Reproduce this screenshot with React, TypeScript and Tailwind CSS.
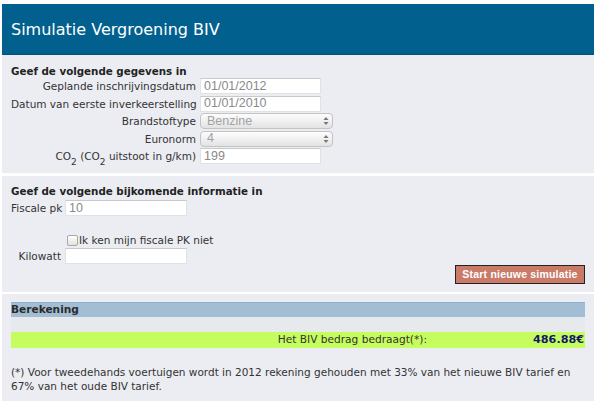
import { useState } from "react";

const sans = "font-['DejaVu_Sans',Verdana,sans-serif]";
const mac = "font-['Liberation_Sans',Arial,sans-serif]";

function TextBox({ value, width }: { value: string; width: string }) {
  return (
    <div className={`${width} h-[16px] bg-white border border-[#e2e2e2] border-t-[#c9c9c9] px-[3px] flex items-center text-[12.5px] text-[#8a8a8a] ${mac}`}>
      {value}
    </div>
  );
}

function SelectBox({ value }: { value: string }) {
  return (
    <div className={`w-[133px] h-[16px] rounded-[4px] border border-[#c3c3c3] bg-gradient-to-b from-[#fdfdfd] to-[#e3e3e3] pl-[6px] pr-[3px] flex items-center justify-between text-[12.5px] text-[#a2a2a2] ${mac}`}>
      <span>{value}</span>
      <svg width="6" height="10" viewBox="0 0 6 10" className="text-[#777]">
        <path d="M0.5 4 L3 1 L5.5 4 Z" fill="currentColor" />
        <path d="M0.5 6 L3 9 L5.5 6 Z" fill="currentColor" />
      </svg>
    </div>
  );
}

export default function App() {
  const [noPk, setNoPk] = useState(false);

  const rows: { label: React.ReactNode; field: React.ReactNode }[] = [
    { label: "Geplande inschrijvingsdatum", field: <TextBox value="01/01/2012" width="w-[121px]" /> },
    { label: "Datum van eerste inverkeerstelling", field: <TextBox value="01/01/2010" width="w-[121px]" /> },
    { label: "Brandstoftype", field: <SelectBox value="Benzine" /> },
    { label: "Euronorm", field: <SelectBox value="4" /> },
    {
      label: (
        <>
          CO<sub className="text-[9px] align-[-3px]">2</sub> (CO<sub className="text-[9px] align-[-3px]">2</sub> uitstoot in g/km)
        </>
      ),
      field: <TextBox value="199" width="w-[121px]" />,
    },
  ];

  return (
    <div className={`w-[600px] h-[412px] bg-white pt-[4px] pl-[2px] pr-[6px] ${sans} text-[#222]`}>
      <div className="h-[51px] bg-[#02608f] border-b border-[#0a4f73] flex items-center pl-[9px] pt-[1px]">
        <h1 className="text-white text-[16px]">Simulatie Vergroening BIV</h1>
      </div>

      <section className="bg-[#ecedf2] h-[118px] pt-[10px] px-[9px]">
        <h2 className="text-[10.3px] font-bold leading-[13px]">Geef de volgende gegevens in</h2>
        <div className="grid grid-cols-[185px_auto] gap-x-[4px] gap-y-[1.5px] text-[10.5px] text-[#333]">
          {rows.map((r, i) => (
            <div key={i} className="contents">
              <div className="text-right leading-[16px] whitespace-nowrap">{r.label}</div>
              <div className="flex items-center">{r.field}</div>
            </div>
          ))}
        </div>
      </section>

      <section className="bg-[#ecedf2] h-[116px] mt-[3px] pt-[9px] px-[9px]">
        <h2 className="text-[10.3px] font-bold leading-[13px]">Geef de volgende bijkomende informatie in</h2>
        <div className="grid grid-cols-[50px_auto] gap-x-[4px] mt-[2px] text-[10.5px] text-[#333]">
          <div className="text-right leading-[16px] whitespace-nowrap">Fiscale pk</div>
          <TextBox value="10" width="w-[122px]" />
          <div className="h-[17px]" />
          <div />
          <div />
          <label className="flex items-center gap-[1px] leading-[15px] pl-[2px] whitespace-nowrap">
            <input
              type="checkbox"
              checked={noPk}
              onChange={(e) => setNoPk(e.target.checked)}
              className="appearance-none w-[11px] h-[11px] m-0 rounded-[2px] border border-[#a8a8a8] bg-gradient-to-b from-[#ffffff] to-[#e2e2e2] checked:bg-[#7a9cc6]"
            />
            Ik ken mijn fiscale PK niet
          </label>
          <div className="text-right leading-[16px] whitespace-nowrap">Kilowatt</div>
          <TextBox value="" width="w-[122px]" />
        </div>
        <div className="flex justify-end mt-[1px]">
          <button className={`h-[19px] w-[130px] bg-[#c97b68] border border-[#222] text-white text-[10.5px] font-bold tracking-[0.2px] ${mac}`}>
            Start nieuwe simulatie
          </button>
        </div>
      </section>

      <section className="bg-[#ecedf2] h-[107px] mt-[2px] pt-[8px] px-[9px]">
        <div className="h-[15px] bg-[#a3bed4] border-t border-[#93b0c8] flex items-center">
          <span className="text-[10.6px] font-bold text-[#2b2b2b]">Berekening</span>
        </div>
        <div className="h-[15px] bg-[#e6eaed]" />
        <div className="h-[16px] bg-[#c6fd5e] flex items-center text-[10.6px]">
          <span className="flex-1 text-right pr-[4px] text-[#333]">Het BIV bedrag bedraagt(*):</span>
          <span className="w-[154px] text-right font-bold text-[#14166e] text-[11.2px] pr-[1px]">486.88€</span>
        </div>
        <p className="mt-[17px] text-[10.5px] leading-[14px] text-[#333]">
          (*) Voor tweedehands voertuigen wordt in 2012 rekening gehouden met 33% van het nieuwe BIV tarief en 67% van het oude BIV tarief.
        </p>
      </section>
    </div>
  );
}
